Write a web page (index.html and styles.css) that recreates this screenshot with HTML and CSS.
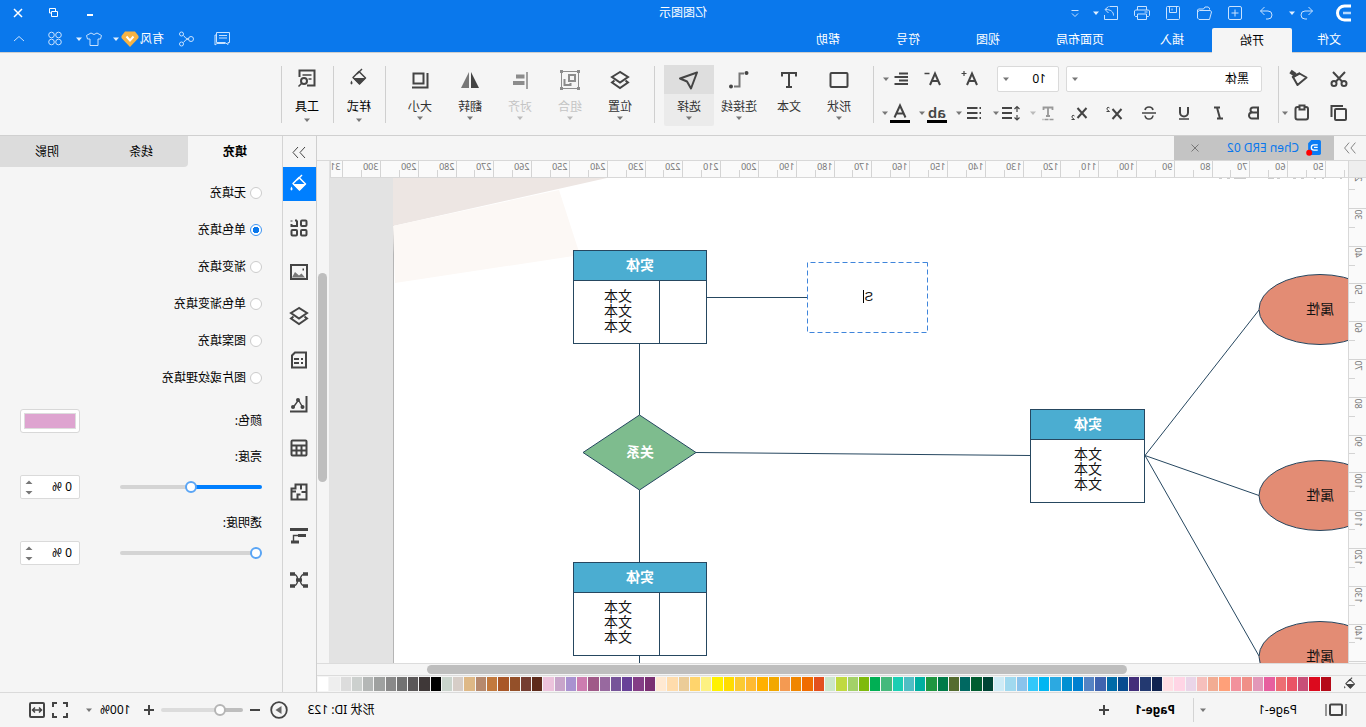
FILE: index.html
```html
<!DOCTYPE html>
<html lang="zh-CN">
<head>
<meta charset="utf-8">
<title>亿图图示</title>
<link rel="stylesheet" href="styles.css">
</head>
<body>
<svg class="defs" aria-hidden="true">
  <symbol id="caret" viewBox="0 0 10 10"><path d="M2 3.500h6L5 7z" fill="currentColor"/></symbol>
  <symbol id="bucket" viewBox="0 0 20 20"><path d="M10 3.500L16 9.500L9.500 16L3.500 10z" fill="none" stroke="currentColor" stroke-width="1.500" stroke-linejoin="round"/><path d="M3.500 10h12.500L9.500 16.500zM17.500 12.500q2 3 0 4q-2-1 0-4z" fill="currentColor"/><path d="M7 1l5 5" stroke="currentColor" stroke-width="1.500"/></symbol>
  <symbol id="layers" viewBox="0 0 20 20"><path d="M10 2l8 5-8 5.500L2 7zM4.500 10.500l-2.500 2 8 5.500 8-5.500-2.500-2" fill="none" stroke="currentColor" stroke-width="2"/></symbol>
</svg>
<div class="app">
  <header class="header">
    <div class="titlebar">
      <div class="quick">
        <svg class="logo" viewBox="0 0 24 22"><path d="M5 4h6.500a7 7 0 0 1 0 14H5" fill="none" stroke="#fff" stroke-width="3"/><path d="M5 11h8" stroke="#b5d9ff" stroke-width="2.500"/></svg>
        <button class="ico undo" aria-label="撤销"><svg viewBox="0 0 20 20"><path d="M8.500 4L4.500 8l4 4M4.500 8H12a4 4 0 0 1 0 8h-2" class="thin"/></svg></button>
        <button class="drop" aria-label="撤销列表"><svg><use href="#caret"/></svg></button>
        <button class="ico gap11" aria-label="恢复"><svg viewBox="0 0 20 20"><path d="M11.500 4l4 4-4 4M15.500 8H8a4 4 0 0 0 0 8h2" class="thin"/></svg></button>
        <button class="ico gap11" aria-label="新建"><svg viewBox="0 0 20 20"><rect x="3.500" y="3.500" width="13" height="13" rx="1.500" class="thin"/><path d="M10 6.500v7M6.500 10h7" class="thin"/></svg></button>
        <button class="ico gap11" aria-label="打开"><svg viewBox="0 0 20 20"><path d="M4.500 6.500V5L6 4h3l1.500 2h5l1 1V15l-1.500 1.500H4.500L2.500 9l1-1.500h11l1.500 1" class="thin"/></svg></button>
        <button class="ico gap11" aria-label="保存"><svg viewBox="0 0 20 20"><rect x="3.500" y="3.500" width="13" height="13" rx="1" class="thin"/><path d="M6.500 3.500v6h7v-6M11 5.500v2" class="thin"/></svg></button>
        <button class="ico gap11" aria-label="打印"><svg viewBox="0 0 20 20"><path d="M5.500 7V3.500h9V7M5 13.500H3.500l-1-1V8l1-1h13l1 1v4.500l-1 1H15M5.500 11h9v5.500h-9zM4.500 9h3" class="thin"/></svg></button>
        <button class="ico gap11" aria-label="导出"><svg viewBox="0 0 20 20"><path d="M11.500 3.500h-8v13h13V12M7.500 12.500c0-4 3-6 8-6M12.500 3.500l3.500 3-3.500 3.500" class="thin"/></svg></button>
        <button class="drop" aria-label="导出格式"><svg><use href="#caret"/></svg></button>
        <button class="ico more" aria-label="自定义快速访问"><svg viewBox="0 0 20 20"><path d="M6.500 7.500h7M7 10.500l3 3 3-3" class="thin"/></svg></button>
      </div>
      <h1 class="title">亿图图示</h1>
      <div class="window-ctl">
        <button aria-label="最小化"><svg viewBox="0 0 20 20"><path d="M7 12h6" stroke="#fff" stroke-width="2"/></svg></button>
        <button aria-label="还原"><svg viewBox="0 0 20 20"><path d="M8.500 8V5.500h6v4.500H13M6.500 8.500h6v5h-6z" fill="none" stroke="#fff"/></svg></button>
        <button aria-label="关闭"><svg viewBox="0 0 20 20"><path d="M6 6l8 8M14 6l-8 8" stroke="#fff" stroke-width="1.500"/></svg></button>
      </div>
    </div>
    <div class="menubar">
      <nav class="menus">
        <button class="menu first">文件</button><button class="menu active">开始</button><button class="menu">插入</button><button class="menu">页面布局</button><button class="menu">视图</button><button class="menu">符号</button><button class="menu">帮助</button>
      </nav>
      <div class="account">
        <button class="ico" aria-label="消息"><svg viewBox="0 0 20 20"><path d="M3.500 3.500h13v10H8l-3 2v-2H3.500zM6 6.500h8M6 9h8M16.500 6h1.500v10l-2-1.500H7.500" class="thin"/></svg></button>
        <button class="ico share" aria-label="分享"><svg viewBox="0 0 20 20"><circle cx="5" cy="10" r="2.500" class="thin"/><circle cx="14.500" cy="5" r="2" class="thin"/><circle cx="14.500" cy="15" r="2" class="thin"/><path d="M7.500 10q3 0 5-3.500M7.500 10q3 0 5 3.500" class="thin"/></svg></button>
        <button class="user">有风<svg class="vip" viewBox="0 0 18 18"><path d="M4 1.500h10l3.500 4.500v2L9 17 .5 8V6z" fill="#f7b344"/><path d="M5.500 6.500L9 10.500l3.500-4" fill="none" stroke="#fff" stroke-width="2"/></svg></button>
        <button class="drop" aria-label="账户"><svg><use href="#caret"/></svg></button>
        <button class="ico skin" aria-label="皮肤"><svg viewBox="0 0 20 20"><path d="M7 4l-4.500 2.500 1 3.500H6v6.500h8V10h2.500l1-3.500L13 4q-3 3-6 0z" class="thin"/></svg></button>
        <button class="drop" aria-label="皮肤列表"><svg><use href="#caret"/></svg></button>
        <button class="ico apps" aria-label="应用"><svg viewBox="0 0 20 20"><circle cx="6.500" cy="6" r="2.800" class="thin"/><circle cx="13.500" cy="6" r="2.800" class="thin"/><circle cx="6.500" cy="13" r="2.800" class="thin"/><circle cx="13.500" cy="13" r="2.800" class="thin"/></svg></button>
        <button class="ico fold" aria-label="收起功能区"><svg viewBox="0 0 20 20"><path d="M5 12l5-4.500L15 12" class="thin"/></svg></button>
      </div>
    </div>
  </header>

  <section class="ribbon" aria-label="开始">
    <div class="group clipboard">
      <div class="row">
        <button class="ico" aria-label="剪切"><svg viewBox="0 0 20 20" class="s"><circle cx="5" cy="14.500" r="2.500"/><circle cx="15" cy="14.500" r="2.500"/><path d="M4 3l9 9.500M16 3l-9 9.500"/></svg></button>
        <button class="ico brush" aria-label="格式刷"><svg viewBox="0 0 20 20" class="s"><path d="M9.500 4.500L2.500 8.500l9 7.500 4.500-8z" stroke-linejoin="round"/><path d="M18.500 2.500L13.500 6" stroke-width="4"/><path d="M9 4l8 4.500"/></svg></button>
      </div>
      <div class="row">
        <button class="ico" aria-label="复制"><svg viewBox="0 0 20 20" class="s"><rect x="3" y="6" width="11" height="11" rx="1"/><path d="M17.500 14V3H6"/></svg></button>
        <button class="ico paste" aria-label="粘贴"><svg viewBox="0 0 20 20" class="s"><rect x="4" y="4" width="12.500" height="12.500" rx="2"/><rect x="7.500" y="2.500" width="5" height="4" fill="#f5f5f5"/></svg></button>
        <button class="drop" aria-label="粘贴选项"><svg><use href="#caret"/></svg></button>
      </div>
    </div>
    <div class="group font">
      <div class="row">
        <span class="pick family"><select aria-label="字体"><option>黑体</option></select><svg><use href="#caret"/></svg></span>
        <span class="pick size"><select aria-label="字号"><option>10</option></select><svg><use href="#caret"/></svg></span>
        <button class="ico gap17" aria-label="增大字号"><svg viewBox="0 0 20 20" class="s"><path d="M3 16L8 4.500 13 16M5 12h6" /><path d="M13.500 4.500h5M16 2v5" stroke-width="1.200"/></svg></button>
        <button class="ico gap17" aria-label="减小字号"><svg viewBox="0 0 20 20" class="s"><path d="M3 16L8 4.500 13 16M5 12h6" /><path d="M13.500 4.500h5" stroke-width="1.500"/></svg></button>
        <button class="ico gap12" aria-label="对齐方式"><svg viewBox="0 0 20 20" class="s"><path d="M3 4.500h9M3 8h13.500M3 11.500h9M3 15h13.500" stroke-width="1.800"/></svg></button>
        <button class="drop" aria-label="对齐列表"><svg><use href="#caret"/></svg></button>
      </div>
      <div class="row second">
        <button class="ico" aria-label="粗体"><svg viewBox="0 0 20 20" class="s"><path d="M6 4.500h5a2.500 2.500 0 0 1 0 5H6zM6 9.500h6a3 3 0 0 1 0 6H6z"/></svg></button>
        <button class="ico gap15" aria-label="斜体"><svg viewBox="0 0 20 20" class="s"><path d="M9 4.500h6M6 15.500h6M12 4.500L9 15.500"/></svg></button>
        <button class="ico gap15" aria-label="下划线"><svg viewBox="0 0 20 20" class="s"><path d="M6 4v5.500a4 4 0 0 0 8 0V4"/><path d="M5 16h10" stroke-width="1.500"/></svg></button>
        <button class="ico gap15" aria-label="删除线"><svg viewBox="0 0 20 20" class="s"><path d="M14 7q-.5-3-4-3T6 7M6 12.500q.5 3.500 4 3.500t4-3.500M3 10h14" stroke-width="1.600"/></svg></button>
        <button class="ico gap15" aria-label="上标"><svg viewBox="0 0 20 20" class="s"><path d="M2.500 6l9 10M11.500 6l-9 10"/><path d="M14.500 5q1.500-1.500 2.500 0t-2.500 3.500h3" stroke-width="1"/></svg></button>
        <button class="ico gap15" aria-label="下标"><svg viewBox="0 0 20 20" class="s"><path d="M2.500 5l9 10M11.500 5l-9 10"/><path d="M14.500 13q1.500-1.500 2.500 0t-2.500 3.500h3" stroke-width="1"/></svg></button>
        <button class="ico gap11 soft" aria-label="文字方向"><svg viewBox="0 0 20 20" class="s"><path d="M5.500 7V4.500h9V7M10 4.500v8.500M8 13h4" stroke-width="1.800"/><path d="M4.500 16.500h11" stroke-width="1.500" stroke-dasharray="4 1"/></svg></button>
        <button class="drop" aria-label="文字方向列表"><svg><use href="#caret"/></svg></button>
        <button class="ico gap7" aria-label="行距"><svg viewBox="0 0 20 20" class="s"><path d="M9 5h10M9 10h10M9 15h10"/><path d="M4 4v5M4 12v5M1.500 6L4 3.500 6.500 6M1.500 14.500L4 17l2.500-2.500" stroke-width="1.200"/></svg></button>
        <button class="drop" aria-label="行距列表"><svg><use href="#caret"/></svg></button>
        <button class="ico gap7" aria-label="项目符号"><svg viewBox="0 0 20 20" class="s"><path d="M6.500 5H17M6.500 10H17M6.500 15H17M3 5h1.500M3 10h1.500M3 15h1.500"/></svg></button>
        <button class="drop" aria-label="项目符号列表"><svg><use href="#caret"/></svg></button>
        <button class="ico mark gap7" aria-label="突出显示">ab</button>
        <button class="drop" aria-label="突出显示颜色"><svg><use href="#caret"/></svg></button>
        <button class="ico mark gap7" aria-label="字体颜色"><svg viewBox="0 0 20 17" class="s"><path d="M4.500 14.500L10 2.500l5.500 12M6.500 10.500h7"/></svg></button>
        <button class="drop" aria-label="字体颜色列表"><svg><use href="#caret"/></svg></button>
      </div>
    </div>
    <div class="group tools">
      <button class="tool"><span class="pic"><svg viewBox="0 0 20 20" class="s"><rect x="1.500" y="3" width="17" height="14" rx="1"/></svg></span>形状<svg class="arrow"><use href="#caret"/></svg></button>
      <button class="tool"><span class="pic"><svg viewBox="0 0 20 20" class="s"><path d="M3 6.500V3h14v3.500M10 3v14M7 17h6"/></svg></span>文本</button>
      <button class="tool"><span class="pic"><svg viewBox="0 0 20 20" class="s"><path d="M5 3.500h4.500v13H15" stroke="#777"/><circle cx="2.500" cy="3" r="2" fill="currentColor" stroke="none"/><circle cx="18" cy="16.500" r="2" fill="currentColor" stroke="none"/></svg></span>连接线<svg class="arrow"><use href="#caret"/></svg></button>
      <button class="tool chosen"><span class="pic"><svg viewBox="0 0 20 20" class="s"><path d="M2 2.500l17 6-7 3-4 7z" stroke-linejoin="round"/></svg></span>选择<svg class="arrow"><use href="#caret"/></svg></button>
    </div>
    <div class="group tools">
      <button class="tool"><span class="pic"><svg><use href="#layers"/></svg></span>位置<svg class="arrow"><use href="#caret"/></svg></button>
      <button class="tool" disabled><span class="pic"><svg viewBox="0 0 20 20" class="s"><rect x="1.500" y="1.500" width="17" height="17" stroke-width="1"/><rect x="5" y="5" width="6" height="6"/><path d="M15.500 9v6h-6v-2"/><path d="M0 0h3v3H0zM17 0h3v3h-3zM0 17h3v3H0zM17 17h3v3h-3z" fill="currentColor" stroke="none"/></svg></span>组合<svg class="arrow"><use href="#caret"/></svg></button>
      <button class="tool" disabled><span class="pic"><svg viewBox="0 0 20 20" class="s"><path d="M3 2v17" stroke-width="1.600"/><path d="M5.500 6.500H14M5.500 13H17" stroke-width="4"/></svg></span>对齐<svg class="arrow"><use href="#caret"/></svg></button>
      <button class="tool"><span class="pic"><svg viewBox="0 0 20 20"><path d="M9 2v16H1z" fill="#444"/><path d="M11 2v16h8z" fill="#777"/></svg></span>翻转<svg class="arrow"><use href="#caret"/></svg></button>
      <button class="tool"><span class="pic"><svg viewBox="0 0 20 20" class="s"><rect x="6.500" y="3.500" width="10" height="10"/><path d="M2.500 3v14.500H18"/></svg></span>大小<svg class="arrow"><use href="#caret"/></svg></button>
    </div>
    <div class="group single">
      <button class="tool big"><span class="pic"><svg><use href="#bucket"/></svg></span>样式<svg class="arrow"><use href="#caret"/></svg></button>
    </div>
    <div class="group single">
      <button class="tool big"><span class="pic"><svg viewBox="0 0 20 20" class="s"><path d="M10 17.500H2.500v-15h15V9"/><circle cx="13" cy="13" r="3"/><path d="M15.500 15.500L18.500 18.500M5.500 7h9M5.500 11h3" stroke-width="1.500"/></svg></span>工具<svg class="arrow"><use href="#caret"/></svg></button>
    </div>
  </section>

  <main class="main">
    <section class="workspace">
      <div class="doc-tabs">
        <button class="expand" aria-label="展开"><svg viewBox="0 0 20 20"><path d="M4 4l5 6-5 6M11 4l5 6-5 6" class="thin"/></svg></button>
        <div class="doc-tab">
          <svg class="doc-icon" viewBox="0 0 15 15"><path d="M1 1.500Q1 0 2.500 0H10l3 3v9.500Q13 14 11.500 14h-9Q1 14 1 12.500z" fill="#0a7cf5"/><path d="M4 4.500h3.500a2.500 2.500 0 0 1 0 5H4M4 7h3.500" stroke="#fff" stroke-width="1.200" fill="none"/><circle cx="12" cy="12" r="2.800" fill="red"/></svg>
          <a class="doc-name" href="#canvas">Chen ERD 02</a>
          <button class="close" aria-label="关闭文档"><svg viewBox="0 0 10 10"><path d="M1.500 1.500l7 7M8.500 1.500l-7 7" stroke="#777"/></svg></button>
        </div>
      </div>
      <div class="corner"></div>
      <svg class="ruler-x" id="ruler-x"></svg>
      <svg class="ruler-y" id="ruler-y"></svg>
      <svg class="canvas" id="canvas">
        <g transform="translate(-18 -178)">
          <rect x="0" y="0" width="973" height="2000" fill="#fff"/>
          <path d="M972.500 0v2000" stroke="#b5b5b5" stroke-width="1"/>
          <path d="M759 178H973V226z" fill="#ede6e3"/>
          <path d="M973 226L807 190 786 255 971 283z" fill="#fcf8f5"/>
          <path d="M24 178.500h2M42 178.500h2M50 178.500h2M62 178.500h3M70 178.500h3M86 178.500h3M92 178.500h6M120 178.500h12M136 178.500h3M144 178.500h3" stroke="#ccc"/>
          <g stroke="#264760" fill="none">
            <path d="M558 297.500H660M726.500 344V415M726.500 490V562M726.500 656V700M670 452.500L336 455.500M221 455.500L107 310M221 455.500L107 495.500M221 455.500L107 656"/>
            <g fill="#e38c74"><ellipse cx="46" cy="309.500" rx="61" ry="35"/><ellipse cx="46" cy="495.500" rx="61" ry="35"/><ellipse cx="46" cy="656.500" rx="61" ry="35"/></g>
            <g fill="#fff"><rect x="659.500" y="250.500" width="133" height="93"/><rect x="659.500" y="562.500" width="133" height="93"/><rect x="221.500" y="409.500" width="114" height="93"/></g>
            <g fill="#4badd1"><rect x="659.500" y="250.500" width="133" height="30"/><rect x="659.500" y="562.500" width="133" height="30"/><rect x="221.500" y="409.500" width="114" height="30"/></g>
            <path d="M706.500 280.500v63M706.500 592.500v63"/>
            <path d="M726.500 415L783 452.500 726.500 490 670 452.500z" fill="#7ebc8e"/>
          </g>
          <rect x="438.500" y="262.500" width="120" height="70" fill="#fff" stroke="#3f85db" stroke-dasharray="5 3"/>
          <path d="M502.500 290v13" stroke="#000"/>
          <g class="label">
            <text x="46" y="314">属性</text><text x="46" y="500">属性</text><text x="46" y="661">属性</text>
            <text x="748" y="301">文本</text><text x="748" y="316">文本</text><text x="748" y="331">文本</text>
            <text x="748" y="612">文本</text><text x="748" y="627">文本</text><text x="748" y="642">文本</text>
            <text x="278" y="459">文本</text><text x="278" y="474">文本</text><text x="278" y="489">文本</text>
            <text class="typed" x="497" y="301">S</text>
          </g>
          <g class="label head">
            <text x="726" y="270">实体</text><text x="726" y="582">实体</text><text x="278" y="429">实体</text><text x="726" y="457">关系</text>
          </g>
        </g>
      </svg>
      <div class="scroll-y"><div class="thumb-y"></div></div>
      <div class="scroll-x"><div class="thumb-x"></div></div>
      <div class="palette">
        <button class="ico fill" aria-label="填充颜色"><svg><use href="#bucket"/></svg></button>
        <div class="swatches" id="swatches"></div>
      </div>
    </section>

    <nav class="rail" aria-label="面板">
      <button class="rail-fold" aria-label="收起"><svg viewBox="0 0 20 20"><path d="M4 5l5 5.500L4 16M11 5l5 5.500-5 5.500" class="thin"/></svg></button>
      <button class="rail-btn on" aria-label="填充"><svg><use href="#bucket"/></svg></button>
      <button class="rail-btn" aria-label="符号库"><svg viewBox="0 0 20 20" class="s"><rect x="2.500" y="2.500" width="5.500" height="5.500" rx="1"/><rect x="2.500" y="12" width="5.500" height="5.500" rx="1"/><rect x="12" y="12" width="5.500" height="5.500" rx="1"/><path d="M12 2.500h2M17.500 2.500v1M17.500 6v2H12V2.500"/></svg></button>
      <button class="rail-btn" aria-label="图片"><svg viewBox="0 0 20 20" class="s"><rect x="2" y="3" width="16" height="14"/><path d="M4 15.500l3.500-4 2.500 2 4-3.500 3 5.500z" fill="#777" stroke="none"/><path d="M5 7.500h1.500"/></svg></button>
      <button class="rail-btn" aria-label="图层"><svg><use href="#layers"/></svg></button>
      <button class="rail-btn" aria-label="页面"><svg viewBox="0 0 20 20" class="s"><path d="M3 2.500h11l3 3v12H3z"/><path d="M6 9h2M10 9h5M6 13h2M10 13h5"/></svg></button>
      <button class="rail-btn" aria-label="图表"><svg viewBox="0 0 20 20" class="s"><path d="M2.500 2v15.500H19"/><path d="M6.500 13l4-7 5 7" stroke-width="1.400"/><g fill="currentColor" stroke="none"><circle cx="6.500" cy="13" r="2"/><circle cx="11" cy="6" r="2"/><circle cx="16" cy="13" r="2"/></g></svg></button>
      <button class="rail-btn" aria-label="表格"><svg viewBox="0 0 20 20" class="s"><rect x="2.500" y="2.500" width="15" height="15" rx="1"/><path d="M2.500 7.500h15M2.500 12.500h15M7.500 7.500v10M12.500 7.500v10"/></svg></button>
      <button class="rail-btn" aria-label="平面图"><svg viewBox="0 0 20 20" class="s"><path d="M2.500 2.500h11v4h4v11h-15zM2.500 10h5M8 2.500v5M11.500 17.500v-5h-3M13 9.500h4.500"/></svg></button>
      <button class="rail-btn" aria-label="甘特图"><svg viewBox="0 0 20 20" class="s"><path d="M1 3.500h18" stroke-width="3"/><path d="M3 9.500h8M10 16h8" stroke-width="3"/><path d="M11 9.500h4.500V15" stroke-width="1.400"/></svg></button>
      <button class="rail-btn" aria-label="思维导图"><svg viewBox="0 0 20 20" class="s"><path d="M4 4q4 0 5 6q-1 6-5 6M16 4q-4 0-5 6q1 6 5 6" stroke-width="1.400"/><path d="M1 4h5M1 16h5M14 4h5M14 16h5M7 10h6" stroke-width="3.500"/></svg></button>
    </nav>

    <aside class="panel">
      <div class="panel-tabs"><button class="ptab on">填充</button><button class="ptab">线条</button><button class="ptab">阴影</button></div>
      <fieldset class="fills">
        <label><input type="radio" name="fill">无填充</label>
        <label><input type="radio" name="fill" checked>单色填充</label>
        <label><input type="radio" name="fill">渐变填充</label>
        <label><input type="radio" name="fill">单色渐变填充</label>
        <label><input type="radio" name="fill">图案填充</label>
        <label><input type="radio" name="fill">图片或纹理填充</label>
      </fieldset>
      <div class="field"><label for="color">颜色:</label><input id="color" class="color" type="color" value="#dea4d0"></div>
      <label class="caption" for="bright">亮度:</label>
      <div class="field"><input id="bright" class="slider half" type="range" min="-100" max="100" value="0">
        <span class="spin"><input type="text" value="0 %" aria-label="亮度值"><svg viewBox="0 0 10 20"><path d="M1.500 7h7L5 3.500zM1.500 14h7L5 17.500z" fill="#777"/></svg></span></div>
      <label class="caption" for="opacity">透明度:</label>
      <div class="field"><input id="opacity" class="slider" type="range" min="0" max="100" value="0">
        <span class="spin"><input type="text" value="0 %" aria-label="透明度值"><svg viewBox="0 0 10 20"><path d="M1.500 7h7L5 3.500zM1.500 14h7L5 17.500z" fill="#777"/></svg></span></div>
    </aside>
  </main>

  <footer class="status">
    <div class="pages">
      <button class="ico wide" aria-label="页面列表"><svg viewBox="0 0 24 20"><rect x="6" y="4.500" width="12" height="10.500" rx="1" fill="none" stroke="#444" stroke-width="2"/><path d="M2 4v12M22 4v12" stroke="#777" stroke-width="1.500"/></svg></button>
      <span class="page-pick"><select aria-label="当前页"><option>Page-1</option></select><svg><use href="#caret"/></svg></span>
      <button class="page-tab">Page-1</button>
      <button class="ico" aria-label="新建页"><svg viewBox="0 0 20 20" class="s"><path d="M10 5v10M5 10h10"/></svg></button>
    </div>
    <div class="view">
      <span class="shape-id">形状 ID: 123</span>
      <button class="ico play" aria-label="播放"><svg viewBox="0 0 20 20"><circle cx="10" cy="10" r="7.800" fill="none" stroke="#444" stroke-width="1.800"/><path d="M7.500 6l6 4-6 4z" fill="#666"/></svg></button>
      <button class="ico minus" aria-label="缩小"><svg viewBox="0 0 20 20" class="s"><path d="M5 10h10"/></svg></button>
      <input class="zoom" type="range" min="0" max="100" value="24" aria-label="缩放">
      <button class="ico" aria-label="放大"><svg viewBox="0 0 20 20" class="s"><path d="M10 5v10M5 10h10"/></svg></button>
      <button class="percent">100%<svg><use href="#caret"/></svg></button>
      <button class="ico full" aria-label="全屏"><svg viewBox="0 0 20 20" class="s"><path d="M3 7V3h4M13 3h4v4M17 13v4h-4M7 17H3v-4"/></svg></button>
      <button class="ico" aria-label="适合宽度"><svg viewBox="0 0 20 20" class="s"><rect x="3" y="3" width="14" height="14" rx="1"/><path d="M5.500 10h9M8 7.500L5.500 10 8 12.500M12 7.500l2.500 2.500-2.500 2.500" stroke-width="1.500"/></svg></button>
    </div>
  </footer>
</div>
<script src="script.js"></script>
</body>
</html>
```
FILE: styles.css
```css
* { box-sizing: border-box; }
body { margin: 0; font: 12px/16px "Noto Sans", "Noto Sans CJK SC", sans-serif; color: #000; overflow: hidden; }
button, input, select { font: inherit; color: inherit; }
button { border: 0; background: none; padding: 0; }
svg { display: block; }
.defs { position: absolute; width: 0; height: 0; }
.thin { fill: none; stroke: currentColor; stroke-width: 1; }
.s { fill: none; stroke: #444; color: #444; stroke-width: 2; }

/* The whole interface is shown as in a mirror. */
.app { height: 100vh; display: flex; flex-direction: column; background: #f5f5f5; transform: scaleX(-1); }

.ico { width: 20px; height: 20px; flex: none; display: block; }
.ico svg { width: 20px; height: 20px; }
.drop { width: 10px; height: 20px; flex: none; display: flex; align-items: center; color: #777; }
.drop svg { width: 10px; height: 10px; }
.gap7 { margin-left: 7px; }
.gap11 { margin-left: 11px; }
.gap12 { margin-left: 12px; }
.gap15 { margin-left: 15px; }
.gap17 { margin-left: 17px; }

.header { background: #0a78ec; color: #fff; }
.header .drop { color: #e0efff; }
.header .ico { color: #c8e2ff; }
.titlebar { height: 26px; display: grid; grid-template-columns: 1fr auto 1fr; align-items: center; }
.quick { display: flex; align-items: center; padding-left: 10px; }
.logo { width: 24px; height: 22px; }
.undo { margin-left: 15px; }
.more { margin-left: 6px; }
.title { margin: 0; font-size: 12px; font-weight: 400; }
.window-ctl { display: flex; justify-content: flex-end; }
.window-ctl button { width: 36px; display: flex; justify-content: center; }
.window-ctl svg { width: 20px; height: 20px; }
.menubar { height: 26px; display: flex; justify-content: space-between; align-items: flex-end; }
.menus { display: flex; }
.menu { height: 24px; padding: 0 28px; }
.menu.first { padding: 0 25px; }
.menu.active { background: #f5f5f5; color: #000; border-radius: 2px 2px 0 0; height: 25px; margin-bottom: -1px; position: relative; z-index: 1; }
.account { display: flex; align-items: center; height: 26px; padding-right: 9px; }
.share { margin-left: 17px; }
.user { margin-left: 12px; display: flex; align-items: center; gap: 1px; }
.vip { width: 18px; height: 18px; }
.skin { margin-left: 7px; }
.apps { margin-left: 9px; }
.fold { margin-left: 16px; }

.ribbon { flex: none; height: 84px; border-top: 1px solid #cfcfcf; border-bottom: 1px solid #d0d0d0; display: flex; }
.group { position: relative; padding-top: 13px; flex: none; }
.group::after { content: ""; position: absolute; right: 0; top: 13px; width: 1px; height: 57px; background: #cfcfcf; }
.row { display: flex; align-items: center; height: 26px; margin-bottom: 8px; }
.clipboard { width: 88px; padding-left: 17px; }
.brush { margin-left: 20px; }
.paste { margin-left: 17px; }
.clipboard .drop { margin-left: 2px; }
.font { width: 405px; padding-left: 16px; }
.row.second { margin-left: -2px; }
.pick { display: grid; align-items: center; }
.pick > * { grid-area: 1 / 1; }
.pick svg { width: 10px; height: 10px; justify-self: end; margin-right: 4px; color: #777; pointer-events: none; }
.pick select { appearance: none; height: 26px; border: 1px solid #dadada; border-radius: 2px; background: #fff; padding: 0 12px; }
.family { width: 196px; }
.size { width: 62px; margin-left: 7px; }
.soft .s { color: #999; stroke: #999; }
.soft + .drop { color: #bbb; }
.mark { border-bottom: 3px solid #000; color: #444; font-size: 15px; line-height: 16px; font-weight: 600; text-align: center; }
.mark svg { height: 17px; }

.tools { display: flex; padding: 12px 10px 0 9px; }
.tool { width: 50px; height: 61px; display: flex; flex-direction: column; align-items: center; color: #333; }
.pic { width: 100%; height: 29px; display: grid; place-items: center; margin-bottom: 5px; color: #444; }
.pic svg { width: 20px; height: 20px; }
.arrow { width: 10px; height: 10px; margin-top: -2px; color: #777; }
.tool.chosen { background: #ebebeb; border-radius: 2px; }
.chosen .pic { background: #dedede; }
.tool:disabled { color: #c4c4c4; }
.tool:disabled .s { color: #8c8c8c; stroke: #8c8c8c; }
.tool:disabled .arrow { color: #bbb; }
.single { width: 52px; padding-top: 12px; }
.tool.big { width: 100%; color: #000; }
.big .pic { height: 26px; margin-bottom: 8px; }
.big .arrow { margin-top: 0; }

.main { flex: 1; min-height: 0; display: flex; }
.workspace { flex: 1; min-width: 0; display: grid; grid-template-columns: 18px 1fr 13px; grid-template-rows: 25px 17px 1fr 13px 16px; }
.doc-tabs { grid-column: 1 / 4; display: flex; border-bottom: 1px solid #d8d8d8; }
.expand { width: 32px; display: grid; place-items: center; color: #777; }
.expand svg { width: 18px; height: 18px; }
.doc-tab { width: 160px; background: #c4c4c4; display: flex; align-items: center; padding: 0 16px 0 12px; }
.doc-icon { width: 16px; height: 16px; }
.doc-name { flex: 1; margin-left: 7px; color: #0a78ec; text-decoration: none; }
.close svg { width: 10px; height: 10px; }
.corner { background: #eee; border: solid #d8d8d8; border-width: 0 1px 1px 0; }
.ruler-x { width: 100%; height: 100%; border-bottom: 1px solid #d8d8d8; border-right: 1px solid #d8d8d8; background: #fafafa; }
.ruler-y { grid-area: 3 / 1 / 4 / 2; width: 100%; height: 100%; border-right: 1px solid #d8d8d8; background: #fafafa; }
.ruler-x text, .ruler-y text { font-size: 9px; fill: #777; }
.ruler-x path, .ruler-y path { stroke: #d4d4d4; fill: none; }
.canvas { grid-area: 3 / 2 / 4 / 3; width: 100%; height: 100%; background: #e3e3e3; overflow: hidden; min-height: 0; }
.label { font: 14px "Liberation Sans", "Noto Sans CJK SC", sans-serif; text-anchor: middle; fill: #111; }
.label.head { font-weight: 700; fill: #fff; }
.label .typed { font-size: 13px; }
.scroll-y { grid-area: 2 / 3 / 4 / 4; padding: 112px 1px 0 2px; border-left: 1px solid #e2e2e2; }
.thumb-y { height: 209px; border-radius: 5px; background: #bebebe; }
.scroll-x { grid-area: 4 / 1 / 5 / 4; border: solid #dcdcdc; border-width: 1px 0; padding: 1px 110px 0 239px; }
.thumb-x { height: 9px; border-radius: 5px; background: #bebebe; }
.palette { grid-area: 5 / 1 / 6 / 4; display: flex; align-items: center; padding: 0 1px 0 9px; }
.fill, .fill svg { width: 14px; height: 14px; color: #444; }
.swatches { flex: 1; margin-left: 12px; display: grid; grid-template-columns: repeat(90, 1fr); gap: 1px; height: 14px; }

.rail { width: 34px; flex: none; border-left: 1px solid #cfcfcf; display: flex; flex-direction: column; align-items: stretch; }
.rail button { display: grid; place-items: center; color: #444; }
.rail svg { width: 20px; height: 20px; }
.rail-fold { height: 31px; }
.rail-btn { height: 34px; margin-bottom: 10px; }
.rail .rail-btn.on { background: #007fff; color: #fff; }

.panel { width: 283px; flex: none; border-left: 1px solid #d4d4d4; }
.panel-tabs { display: flex; height: 31px; }
.ptab { flex: 1; background: #dcdcdc; }
.ptab.on { background: none; font-weight: 700; }
.ptab.on + .ptab { border-bottom-left-radius: 4px; }
.fills { border: 0; margin: 7px 0 0; padding: 0 20px; }
.fills label { display: flex; align-items: center; height: 37px; gap: 4px; }
.fills input { appearance: none; margin: 0; width: 12px; height: 12px; border: 1px solid #ccc; border-radius: 50%; background: #fff; }
.fills input:checked { border-color: #3f95f2; background: radial-gradient(#0a78ec 0 3px, #fff 3px); }
.field { display: flex; align-items: center; justify-content: space-between; height: 24px; padding: 0 20px; }
.fills + .field { margin-top: 13px; }
.caption { display: block; padding: 0 20px; margin: 16px 0 10px; }
.color { appearance: none; width: 60px; height: 24px; padding: 3px; border: 1px solid #d8d8d8; border-radius: 3px; background: #fff; }
.color::-webkit-color-swatch-wrapper { padding: 0; }
.color::-webkit-color-swatch { border: 1px solid #ddd; border-radius: 0; }
.slider, .zoom { appearance: none; margin: 0; height: 4px; border-radius: 2px; background: #d4d4d4; }
.slider { width: 142px; }
.slider.half { background: linear-gradient(90deg, #007fff 50%, #d4d4d4 50%); }
.slider::-webkit-slider-thumb { appearance: none; width: 12px; height: 12px; border-radius: 50%; border: 2px solid #5aa5f5; background: #fff; }
.spin { width: 60px; height: 24px; border: 1px solid #dadada; border-radius: 2px; background: #fff; display: flex; align-items: center; }
.spin input { border: 0; background: none; width: 45px; padding: 0 0 0 7px; outline: 0; }
.spin svg { width: 10px; height: 20px; }

.status { flex: none; height: 35px; border-top: 1px solid #dadada; display: flex; align-items: center; justify-content: space-between; }
.pages, .view { display: flex; align-items: center; }
.pages { padding-left: 18px; }
.wide, .wide svg { width: 24px; }
.page-pick { display: grid; align-items: center; width: 131px; height: 24px; border-right: 1px solid #d4d4d4; }
.page-pick > * { grid-area: 1 / 1; }
.page-pick select { appearance: none; border: 0; background: none; padding: 0 27px; }
.page-pick svg { width: 10px; height: 10px; justify-self: end; margin-right: 4px; color: #777; pointer-events: none; }
.page-tab { font-weight: 700; padding: 0 21px 0 18px; }
.view { padding-right: 27px; }
.play { margin-left: 19px; }
.minus { margin-left: 4px; }
.zoom { width: 82px; margin: 0 2px; background: linear-gradient(90deg, #bebebe 24%, #dcdcdc 24%); }
.zoom::-webkit-slider-thumb { appearance: none; width: 12px; height: 12px; border-radius: 50%; border: 2px solid #b5b5b5; background: #fff; }
.percent { margin-left: 8px; display: flex; align-items: center; gap: 6px; }
.percent svg { width: 10px; height: 10px; color: #777; }
.full { margin: 0 3px 0 14px; }
```
FILE: script.js
```js
const colors = `b50a18 dc0a1e c84f78 ea5466 ed6d73 e75f9e e297b8 f08f88 f2919c ffa079 f2ac93 f6bfbc ead5e8 ffd5e5 ffdfe4
102350 233970 432e7a 084b90 006ba8 3f63af 5583c3 0080d0 0090d2 2ca9e1 00b6f2 32c8fa 8ac3ec a0d9ef ceebf6
004435 005c30 006861 556c2f 007b48 1f9640 00af9f 50bec4 1bceb3 45b97c 00af54 7fba0c a3d168 c0d940 cce6c9
e3501e f06c00 f08600 f49a52 f2a800 ffb000 ffba32 fbca32 ffdc00 fff100 fdf182 ffd46c ebcc97 ffdcac ffe9d2
7a3072 843e86 684198 765499 98699f a05a88 cd7db0 a992d0 c8a5ca ecc3dc
5e2b1b 753d31 945029 a95728 c2793d b6896d deb886 d6cdc7 cad4cc
000000 3f3838 5b5859 727272 898989 9fa1a0 b4b7b6 ccd0ce dcdcdc eeeeee ffffff`.split(/\s+/);
document.getElementById('swatches').innerHTML = colors
  .map(c => `<button aria-label="#${c}" style="background:#${c}"></button>`).join('');

/* One ruler step is 10 mm; a half step has a short tick. */
const step = 37.8;
const at = (origin, i) => Math.round(origin + i * step) + 0.5;

let marks = '';
for (let i = 0; i < 27; i++) {
  const x = at(22, i), half = at(22 - step / 2, i);
  marks += `<path d="M${x} 0V16M${half} 9V16"/><text x="${x + 2}" y="9">${50 + i * 10}</text>`;
}
document.getElementById('ruler-x').innerHTML = marks;

marks = '';
for (let i = 0; i < 14; i++) {
  const y = at(-8, i), half = at(-8 + step / 2, i);
  marks += `<path d="M0 ${y}H17M11 ${half}H17"/><text text-anchor="end" transform="translate(11 ${y + 1}) rotate(-90)">${20 + i * 10}</text>`;
}
document.getElementById('ruler-y').innerHTML = marks;
```
